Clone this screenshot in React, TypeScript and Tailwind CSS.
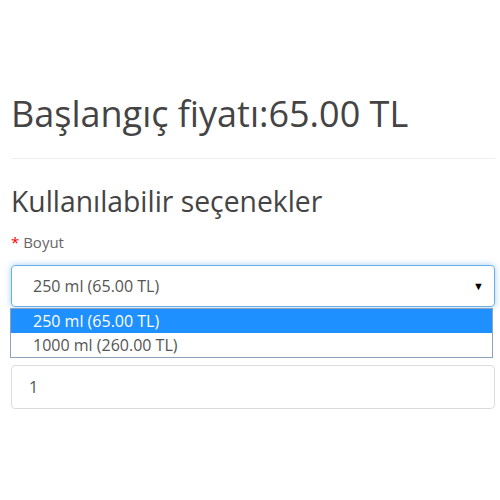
export default function App() {
  return (
    <div className="w-[500px] h-[500px] bg-white font-['Open_Sans',sans-serif] px-[11px] pt-[87px]">
      <h1 className="text-[36px] leading-[54px] text-[#444] font-normal">Başlangıç fiyatı:65.00 TL</h1>
      <hr className="mt-[17px] mr-[-6px] border-t border-[#eee]" />
      <h2 className="mt-[22px] text-[28.3px] leading-[40px] text-[#444] font-normal">Kullanılabilir seçenekler</h2>
      <div className="mt-[11px] text-[15px] leading-[20px] text-[#666]">
        <span className="text-[#f00]">* </span>Boyut
      </div>
      <div className="relative mt-[13px] mr-[-6px]">
        <div className="h-[42px] flex items-center justify-between pl-[21px] pr-[10px] border border-[#66afe9] rounded-[4px] shadow-[0_0_6px_rgba(102,175,233,0.6)] text-[16px] text-[#555]">
          <span>250 ml (65.00 TL)</span>
          <span className="text-[11px] text-black">▼</span>
        </div>
        <div className="mt-[1px] mr-[2px] ml-[-1px] border border-[#8ea3bb] bg-white text-[16px] leading-[24px]">
          <div className="bg-[#1e90ff] text-white pl-[22px]">250 ml (65.00 TL)</div>
          <div className="text-[#555] pl-[22px]">1000 ml (260.00 TL)</div>
        </div>
        <div className="mt-[7px] h-[44px] flex items-center pl-[17px] border border-[#ddd] rounded-[4px] text-[16px] text-[#555]">1</div>
      </div>
    </div>
  );
}
